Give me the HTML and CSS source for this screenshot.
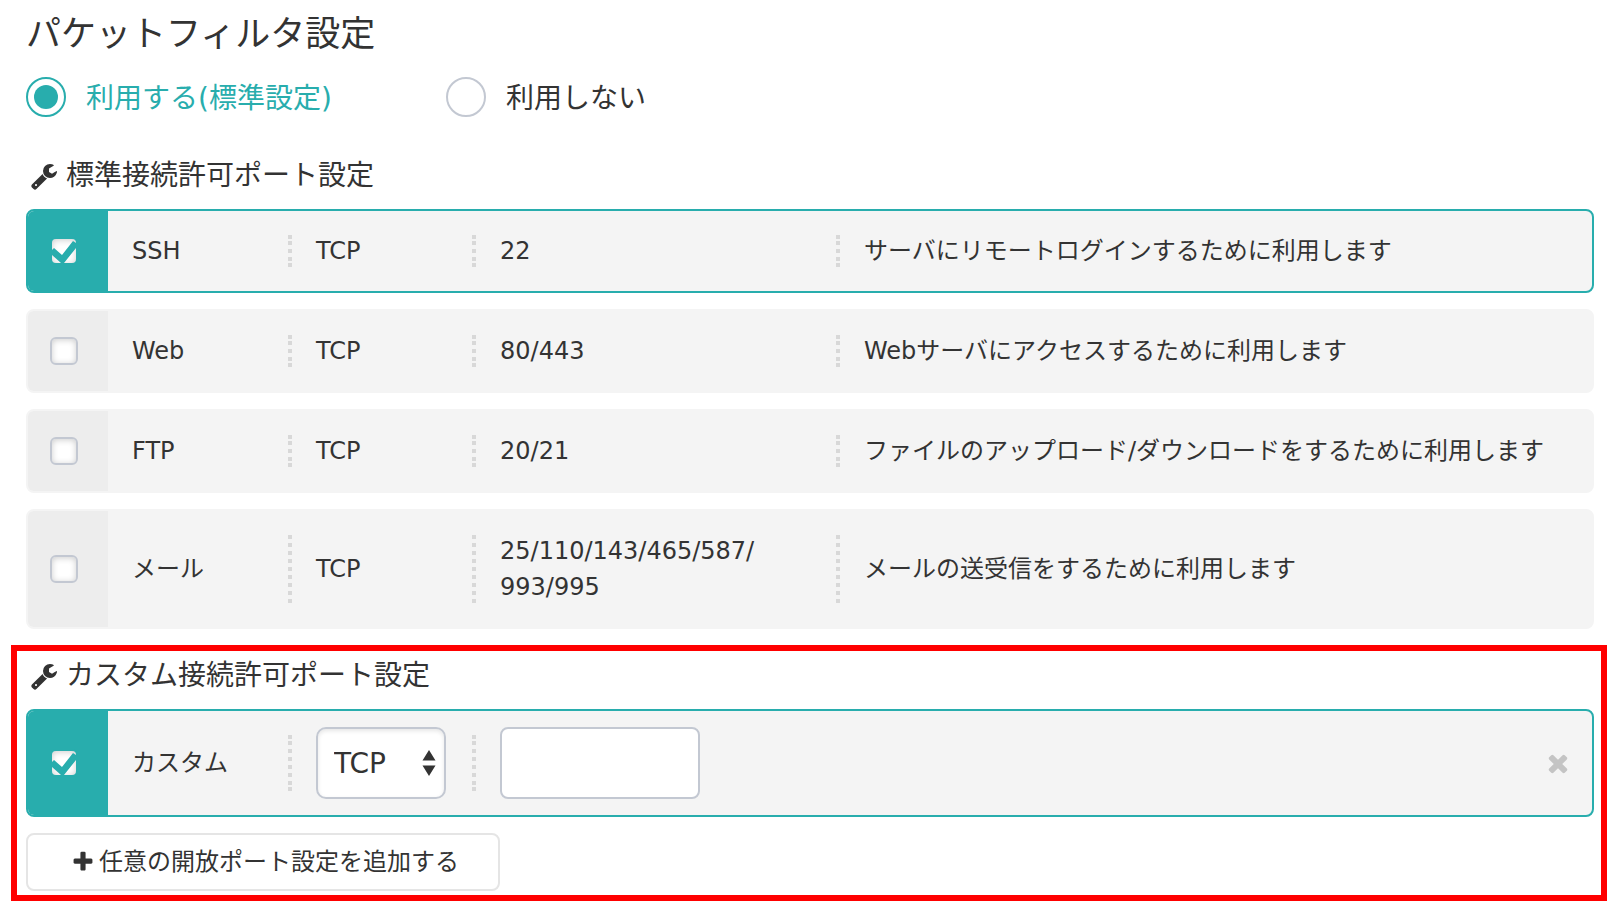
FILE: index.html
```html
<!DOCTYPE html>
<html lang="ja">
<head>
<meta charset="utf-8">
<title>パケットフィルタ設定</title>
<link rel="stylesheet" href="styles.css">
</head>
<body>
<svg class="defs" aria-hidden="true">
  <symbol id="wrench" viewBox="0 0 1792 1792"><path d="M448 1472q0-26-19-45t-45-19-45 19-19 45 19 45 45 19 45-19 19-45zm644-420l-682 682q-37 37-90 37-52 0-91-37l-106-108q-38-36-38-90 0-53 38-91l681-681q39 98 114.500 173.500t173.500 114.500zm634-435q0 39-23 106-47 134-164.500 217.500t-258.500 83.500q-185 0-316.500-131.500t-131.500-316.500 131.500-316.500 316.500-131.500q58 0 121.500 16.500t107.500 46.500q16 11 16 28t-16 28l-293 169v224l193 107q5-3 79-48.500t135.500-81 70.500-35.500q15 0 23.500 10t8.500 25z"/></symbol>
</svg>
<main>
  <section class="panel">
    <h1 class="title">パケットフィルタ設定</h1>
    <div class="choices" role="radiogroup" aria-label="パケットフィルタ設定">
      <label class="choice"><input class="radio" type="radio" name="filter" checked><span class="choice-text">利用する(標準設定)</span></label>
      <label class="choice"><input class="radio" type="radio" name="filter"><span class="choice-text">利用しない</span></label>
    </div>
    <h2 class="heading"><svg class="icon"><use href="#wrench"/></svg>標準接続許可ポート設定</h2>
    <table class="ports">
      <tbody>
        <tr class="row row-on">
          <td class="pick"><input class="check" type="checkbox" id="ssh" checked></td>
          <td class="name"><label for="ssh">SSH</label></td>
          <td class="cell"><span class="text">TCP</span></td>
          <td class="cell"><span class="text">22</span></td>
          <td class="cell"><span class="text">サーバにリモートログインするために利用します</span></td>
        </tr>
        <tr class="row">
          <td class="pick"><input class="check" type="checkbox" id="web"></td>
          <td class="name"><label for="web">Web</label></td>
          <td class="cell"><span class="text">TCP</span></td>
          <td class="cell"><span class="text">80/443</span></td>
          <td class="cell"><span class="text">Webサーバにアクセスするために利用します</span></td>
        </tr>
        <tr class="row">
          <td class="pick"><input class="check" type="checkbox" id="ftp"></td>
          <td class="name"><label for="ftp">FTP</label></td>
          <td class="cell"><span class="text">TCP</span></td>
          <td class="cell"><span class="text">20/21</span></td>
          <td class="cell"><span class="text">ファイルのアップロード/ダウンロードをするために利用します</span></td>
        </tr>
        <tr class="row row-tall">
          <td class="pick"><input class="check" type="checkbox" id="mail"></td>
          <td class="name"><label for="mail">メール</label></td>
          <td class="cell"><span class="text">TCP</span></td>
          <td class="cell"><span class="text">25/110/143/465/587/<br>993/995</span></td>
          <td class="cell"><span class="text">メールの送受信をするために利用します</span></td>
        </tr>
      </tbody>
    </table>
  </section>

  <section class="panel panel-marked">
    <h2 class="heading"><svg class="icon"><use href="#wrench"/></svg>カスタム接続許可ポート設定</h2>
    <table class="ports">
      <tbody>
        <tr class="row row-on">
          <td class="pick"><input class="check" type="checkbox" id="custom" checked></td>
          <td class="name"><label for="custom">カスタム</label></td>
          <td class="cell">
            <span class="select-wrap">
              <select class="select" aria-label="プロトコル"><option>TCP</option><option>UDP</option></select>
              <svg class="arrows" viewBox="0 0 14 26" aria-hidden="true"><path d="M7 0l6.500 10.500H.5zM7 26l6.500-10.500H.5z"/></svg>
            </span>
          </td>
          <td class="cell"><input class="field" type="text" aria-label="ポート番号"></td>
          <td class="remove">
            <button class="remove-button" type="button" aria-label="削除"><svg class="icon" viewBox="0 0 1792 1792"><path d="M1490 1322q0 40-28 68l-136 136q-28 28-68 28t-68-28l-294-294-294 294q-28 28-68 28t-68-28l-136-136q-28-28-28-68t28-68l294-294-294-294q-28-28-28-68t28-68l136-136q28-28 68-28t68 28l294 294 294-294q28-28 68-28t68 28l136 136q28 28 28 68t-28 68l-294 294 294 294q28 28 28 68z"/></svg></button>
          </td>
        </tr>
      </tbody>
    </table>
    <button class="add" type="button"><svg class="plus" viewBox="150 0 1492 1792" aria-hidden="true"><path d="M1600 736v192q0 40-28 68t-68 28h-416v416q0 40-28 68t-68 28h-192q-40 0-68-28t-28-68v-416h-416q-40 0-68-28t-28-68v-192q0-40 28-68t68-28h416v-416q0-40 28-68t68-28h192q40 0 68 28t28 68v416h416q40 0 68 28t28 68z"/></svg>任意の開放ポート設定を追加する</button>
  </section>
</main>
</body>
</html>
```

FILE: styles.css
```css
:root {
  --teal: #28adad;
  --ink: #333333;
  --line: #c3c8d2;
  --dot: #d8d8d8;
  --row: #f4f4f4;
}

* {
  box-sizing: border-box;
}

body {
  margin: 0;
  background: #ffffff;
  color: var(--ink);
  font-family: Verdana, "DejaVu Sans", "Noto Sans CJK JP", sans-serif;
  font-size: 24px;
  line-height: 36px;
}

input,
select,
button {
  margin: 0;
  color: inherit;
  font: inherit;
}

.defs {
  display: none;
}

.panel {
  margin: 0 16px 16px 26px;
}

.panel-marked {
  margin: 0 3px 0 11px;
  padding: 0 7px 4px 9px;
  border: 6px solid #ff0000;
}

.title {
  margin: 0 0 21px;
  padding-top: 12px;
  font-size: 35px;
  font-weight: 400;
  line-height: 44px;
}

.choices {
  display: grid;
  grid-template-columns: 420px 1fr;
  margin-bottom: 34px;
  font-size: 28px;
  line-height: 36px;
}

.choice {
  display: flex;
  align-items: center;
  gap: 20px;
}

.choice:has(:checked) {
  color: var(--teal);
}

.choice-text {
  padding-top: 4px;
}

.radio {
  appearance: none;
  display: grid;
  place-items: center;
  width: 40px;
  height: 40px;
  border: 2px solid var(--line);
  border-radius: 50%;
  background: #ffffff;
}

.radio:checked {
  border-color: var(--teal);
}

.radio:checked::before {
  content: "";
  width: 24px;
  height: 24px;
  border-radius: 50%;
  background: var(--teal);
}

.heading {
  display: flex;
  align-items: center;
  gap: 8px;
  margin: 0 0 8px;
  padding-left: 4px;
  font-size: 28px;
  font-weight: 400;
  line-height: 50px;
}

.icon {
  flex: none;
  display: block;
  width: 28px;
  height: 28px;
  fill: currentColor;
}

.ports,
.ports tbody {
  display: grid;
  gap: 16px;
}

.row {
  display: grid;
  grid-template-columns: 80px 180px 184px 364px 1fr;
  border: 2px solid var(--row);
  border-radius: 8px;
  background: var(--row);
}

.row-on {
  border-color: var(--teal);
}

.pick,
.name,
.cell,
.remove {
  display: flex;
  align-items: center;
  padding: 0;
}

.pick {
  padding-left: 22px;
  border-radius: 6px 0 0 6px;
  background: #ededed;
}

.row-on .pick {
  background: var(--teal);
}

.name {
  padding-left: 24px;
}

.cell {
  gap: 24px;
}

/* Dotted divider: a dot at each end and an even run between them. */
.cell::before {
  content: "";
  flex: none;
  align-self: stretch;
  width: 4px;
  margin: 24px 0;
  padding: 6px 0;
  background:
    linear-gradient(var(--dot), var(--dot)) top / 4px 4px no-repeat border-box,
    linear-gradient(var(--dot), var(--dot)) bottom / 4px 4px no-repeat border-box,
    linear-gradient(var(--dot) 50%, transparent 50%) top / 4px 8px repeat-y content-box;
}

.row-tall .cell::before {
  padding: 0;
}

.text {
  padding: 22px 0;
}

.check {
  appearance: none;
  width: 28px;
  height: 28px;
  border: 2px solid var(--line);
  border-radius: 6px;
  background: #ffffff;
  box-shadow: inset 0 1px 6px rgba(0, 0, 0, 0.2);
}

.check:checked {
  border-color: var(--teal);
}

.check:checked::before {
  content: "";
  display: block;
  width: 24px;
  height: 24px;
  background: var(--teal);
  clip-path: polygon(0 11px, 2px 9px, 10px 16px, 21px 2px, 24px 4px, 24px 9px, 12px 24px, 9px 24px, 0 16px);
}

.select-wrap {
  position: relative;
  margin: 16px 0;
}

.select {
  appearance: none;
  display: block;
  width: 130px;
  height: 72px;
  padding: 2px 16px 0;
  border: 2px solid var(--line);
  border-radius: 10px;
  background: #ffffff;
  box-shadow: inset 0 2px 4px rgba(0, 0, 0, 0.1);
  font-size: 28px;
}

.arrows {
  position: absolute;
  top: 23px;
  right: 10px;
  width: 14px;
  height: 26px;
  fill: var(--ink);
  pointer-events: none;
}

.field {
  width: 200px;
  height: 72px;
  padding: 0 16px;
  border: 2px solid var(--line);
  border-radius: 8px;
  background: #ffffff;
}

.remove {
  justify-content: flex-end;
  padding-right: 20px;
}

.remove-button {
  padding: 0;
  border: 0;
  background: none;
  color: #c4c4c4;
}

.add {
  display: flex;
  align-items: center;
  gap: 6px;
  margin-top: 16px;
  padding: 9px 39px 9px 45px;
  border: 2px solid #e5e5e5;
  border-radius: 8px;
  background: #ffffff;
}

.plus {
  width: 20px;
  height: 24px;
  fill: currentColor;
}
```
